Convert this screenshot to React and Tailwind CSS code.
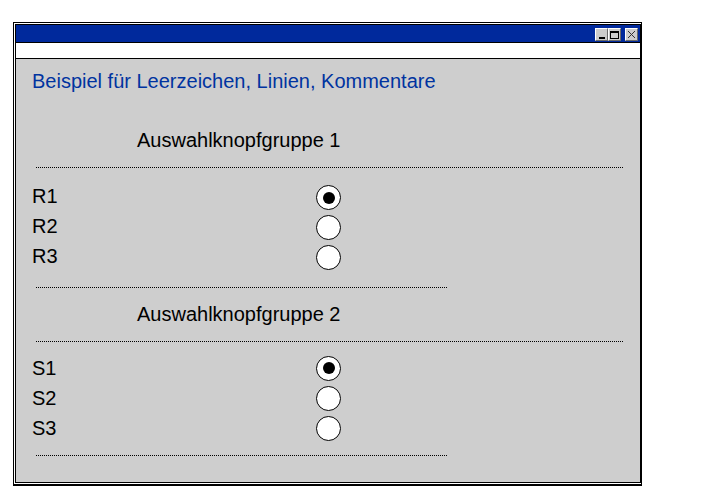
import React from "react";

function Radio({ checked }) {
  return (
    <div className="w-[25px] h-[25px] rounded-full border border-black bg-white flex items-center justify-center">
      {checked && <div className="w-[12px] h-[12px] rounded-full bg-black" />}
    </div>
  );
}

function Row({ label, checked, shift }) {
  return (
    <div className="h-[30px] flex items-center">
      <div className="w-[300px] pl-[16px] text-[20px] leading-[22px] text-black">{label}</div>
      <div className={shift}>
        <Radio checked={checked} />
      </div>
    </div>
  );
}

function Dots({ w }) {
  return <div className={`ml-[20px] border-t border-dotted border-black ${w}`} />;
}

function TBtn({ children }) {
  return (
    <div className="w-[13px] h-[13px] bg-[#cccccc] border-t border-l border-white border-r border-b border-r-[#6a6a6a] border-b-[#6a6a6a] flex items-center justify-center">
      {children}
    </div>
  );
}

export default function App() {
  return (
    <div className="w-[720px] h-[504px] bg-white" style={{ fontFamily: '"Liberation Sans", Arial, sans-serif' }}>
      <div className="relative top-[22px] left-[13px] w-[629px] h-[464px] border-t border-l border-r border-b-2 border-black bg-white pl-[1px] pt-[1px] pb-[1px]">
        <div className="w-full h-full border border-black bg-[#cecece] flex flex-col">
          <div className="h-[18px] shrink-0 bg-[#00299c] flex items-start justify-end pt-[3px] pr-[2px] border-b border-black">
            <TBtn>
              <div className="w-[6px] h-[2px] bg-black mt-[6px]" />
            </TBtn>
            <TBtn>
              <div className="w-[9px] h-[8px] border border-black border-t-2" />
            </TBtn>
            <div className="w-[4px]" />
            <TBtn>
              <svg width="9" height="9" viewBox="0 0 9 9">
                <path d="M1 1 L8 8 M8 1 L1 8" stroke="#333" strokeWidth="1" />
              </svg>
            </TBtn>
          </div>
          <div className="h-[16px] shrink-0 bg-white border-b border-black" />
          <div className="flex flex-col">
            <div className="mt-[11px] h-[22px] leading-[22px] pl-[16px] text-[20px] text-[#0033a0]">
              Beispiel für Leerzeichen, Linien, Kommentare
            </div>
            <div className="mt-[37px] h-[22px] leading-[22px] pl-[121px] text-[20px] text-black">
              Auswahlknopfgruppe 1
            </div>
            <div className="mt-[16px]">
              <Dots w="w-[587px]" />
            </div>
            <div className="mt-[13px]">
              <Row label="R1" checked shift="mt-[3px]" />
              <Row label="R2" shift="mt-[3px]" />
              <Row label="R3" shift="mt-[3px]" />
            </div>
            <div className="mt-[16px]">
              <Dots w="w-[411px]" />
            </div>
            <div className="mt-[15px] h-[22px] leading-[22px] pl-[121px] text-[20px] text-black">
              Auswahlknopfgruppe 2
            </div>
            <div className="mt-[16px]">
              <Dots w="w-[587px]" />
            </div>
            <div className="mt-[11px]">
              <Row label="S1" checked shift="" />
              <Row label="S2" shift="" />
              <Row label="S3" shift="" />
            </div>
            <div className="mt-[12px]">
              <Dots w="w-[411px]" />
            </div>
          </div>
        </div>
      </div>
    </div>
  );
}
